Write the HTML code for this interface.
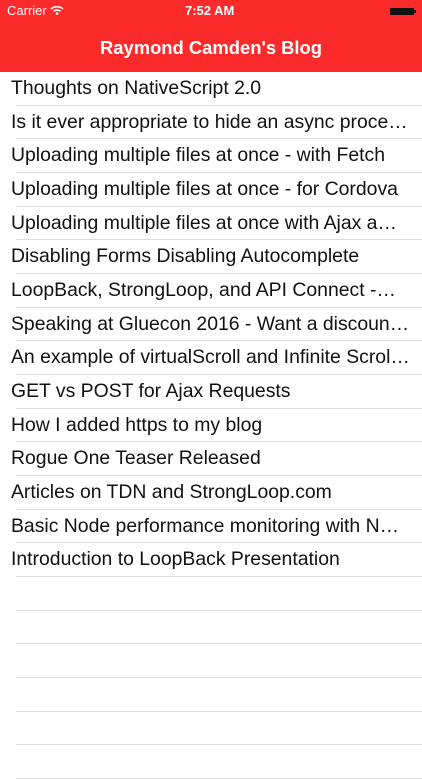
<!DOCTYPE html>
<html><head><style>
body{margin:0;width:422px;height:750px;overflow:hidden;background:#fff;font-family:"Liberation Sans",sans-serif;}
.hdr{position:absolute;left:0;top:0;width:422px;height:72px;background:#fc2b2b;color:#fff;}
.sb{position:absolute;top:3px;font-size:13px;}
.title{position:absolute;top:37px;width:100%;text-align:center;font-weight:bold;font-size:18.4px;}
.row{position:absolute;left:0;width:422px;height:33.67px;}
.row span{position:absolute;left:11px;top:5px;font-size:19.4px;color:#111;white-space:nowrap;}
.row i{position:absolute;left:16px;right:0;bottom:0;height:1px;background:#dcdcdc;}
</style></head><body>
<div class="hdr">
<div class="sb" style="left:7px">Carrier <svg width="14" height="10" viewBox="0 0 14 10" style="vertical-align:0"><path d="M1 4a9 9 0 0 1 12 0M3.5 6.3a5.5 5.5 0 0 1 7 0" stroke="#fff" stroke-width="1.6" fill="none"/><circle cx="7" cy="8.6" r="1.3" fill="#fff"/></svg></div>
<div class="sb" style="left:185px;font-weight:bold">7:52 AM</div>
<div style="position:absolute;left:390px;top:8px;width:24px;height:7px;background:#111;border-radius:1px"></div>
<div style="position:absolute;left:414px;top:10px;width:2px;height:3px;background:#111"></div>
<div class="title">Raymond Camden's Blog</div>
</div>
<div id="list"></div>
<script>
var t=["Thoughts on NativeScript 2.0","Is it ever appropriate to hide an async proce…","Uploading multiple files at once - with Fetch","Uploading multiple files at once - for Cordova","Uploading multiple files at once with Ajax a…","Disabling Forms Disabling Autocomplete","LoopBack, StrongLoop, and API Connect -…","Speaking at Gluecon 2016 - Want a discoun…","An example of virtualScroll and Infinite Scrol…","GET vs POST for Ajax Requests","How I added https to my blog","Rogue One Teaser Released","Articles on TDN and StrongLoop.com","Basic Node performance monitoring with N…","Introduction to LoopBack Presentation","","","","","",""];
var h="";for(var i=0;i<t.length;i++){h+='<div class="row" style="top:'+(72+i*33.67)+'px"><span>'+t[i]+'</span><i></i></div>';}
document.getElementById("list").innerHTML=h;
</script>
</body></html>
